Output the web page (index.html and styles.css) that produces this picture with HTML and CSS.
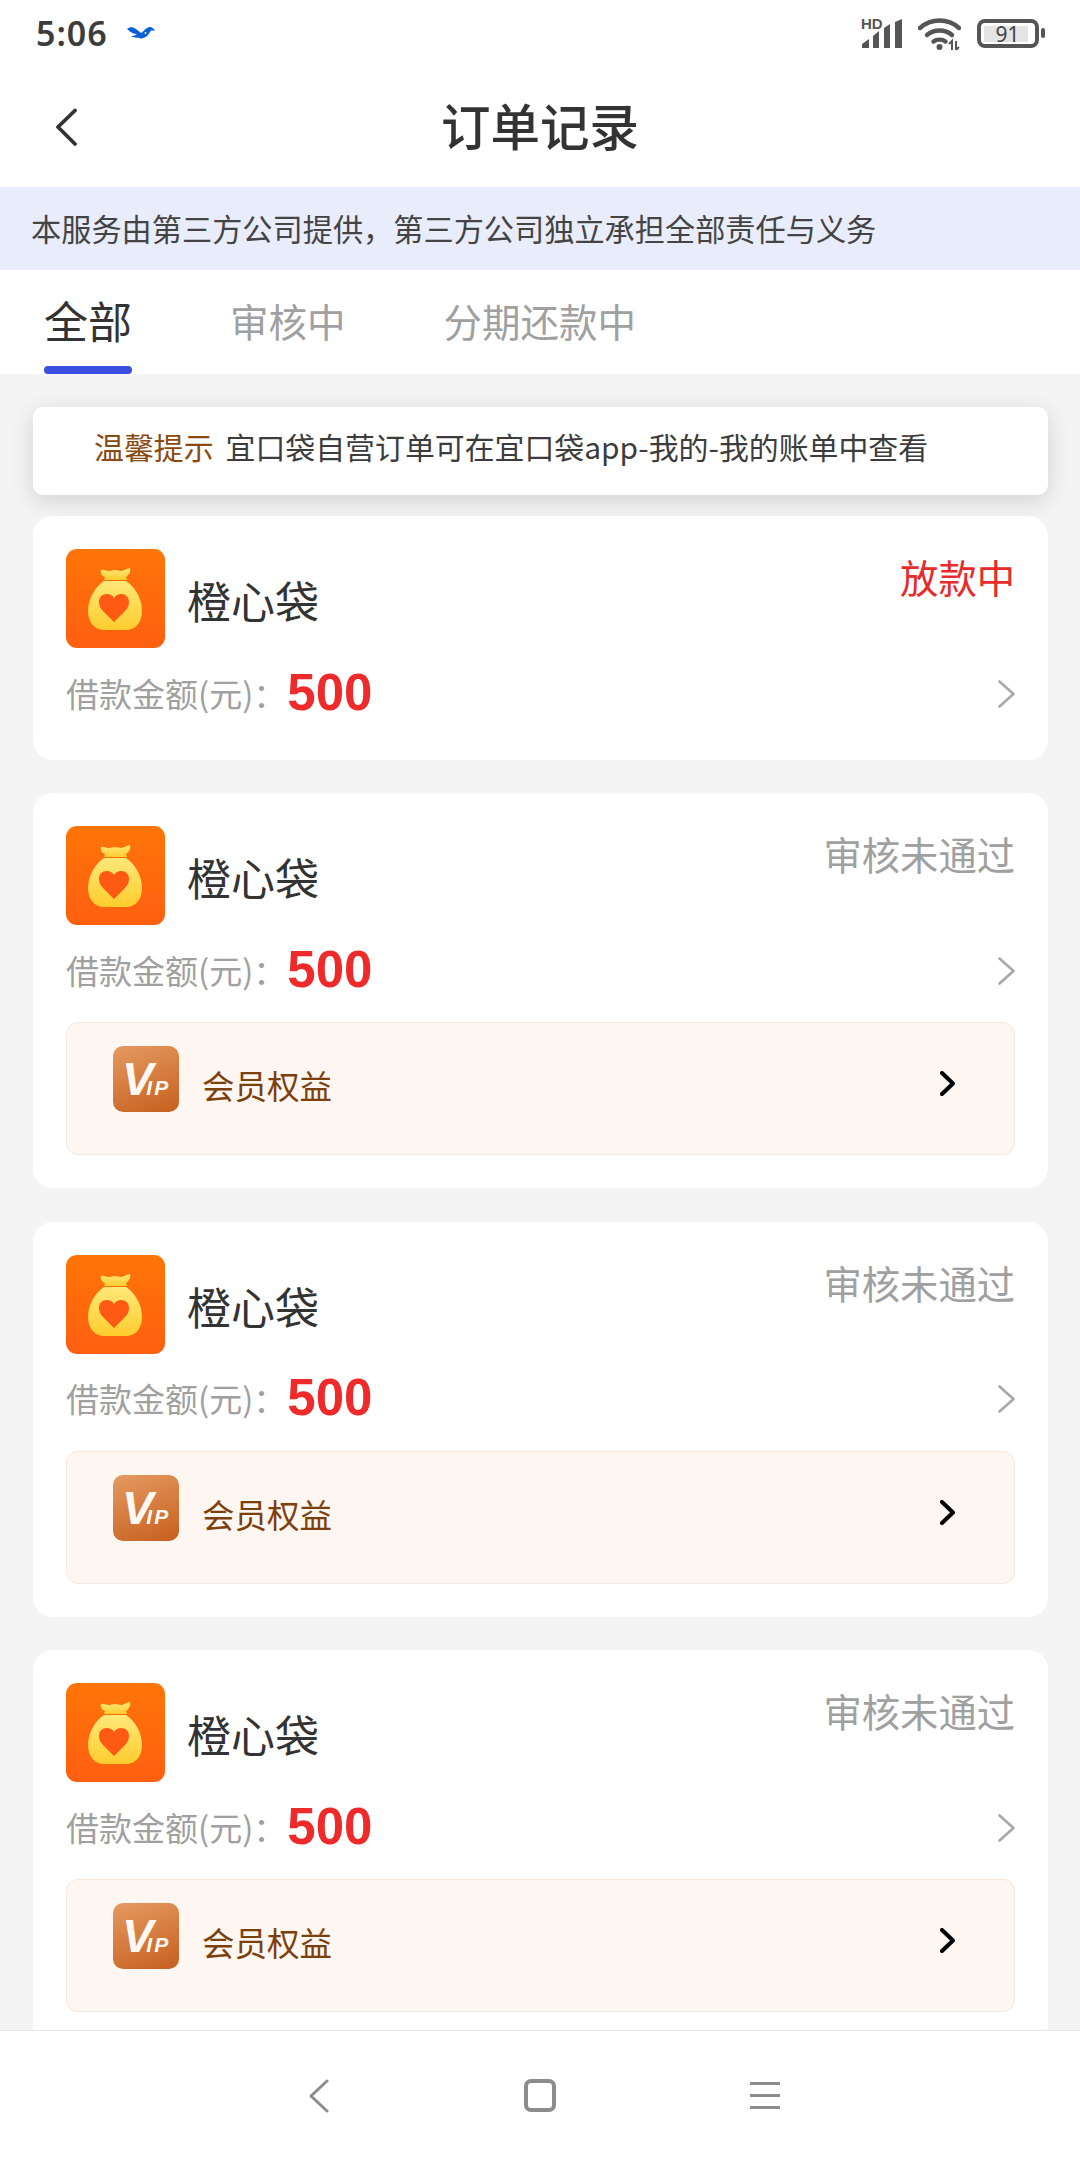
FILE: index.html
```html
<!DOCTYPE html>
<html>
<head>
  <title>订单记录</title>
  <link rel="stylesheet" href="styles.css">
</head>
<body>
  <svg class="sprites" width="0" height="0">
    <defs>
      <linearGradient id="tile" x1="0" y1="0" x2="0" y2="1">
        <stop offset="0" stop-color="#ff7508"/>
        <stop offset="1" stop-color="#ff5f10"/>
      </linearGradient>
      <linearGradient id="bag" x1="0" y1="0" x2="0" y2="1">
        <stop offset="0" stop-color="#ffe878"/>
        <stop offset="1" stop-color="#ffcc2e"/>
      </linearGradient>
      <symbol id="logo" viewBox="0 0 99 99">
        <rect width="99" height="99" rx="11" fill="url(#tile)"/>
        <path d="M35 21c3-1 5 1 8 1 2 0 4-1 6-1 2 0 4 1 6 1 3 0 6-3 9-3 1 4-1 7-4 9l1 3H38l1-3c-3-1-5-4-4-7z" fill="url(#bag)"/>
        <path d="M38 32h22c8 5 16 17 16 30 0 12-7 19-16 19H38c-9 0-16-7-16-19 0-13 8-25 16-30z" fill="url(#bag)"/>
        <path d="M48 73 L37 62c-3-3-4-6-4-9 0-5 3-8 8-8 3 0 5 1 7 4 2-3 4-4 7-4 5 0 8 3 8 8 0 3-1 6-4 9z" fill="#ff5a14"/>
      </symbol>
      <symbol id="chev" viewBox="0 0 17 28">
        <path d="M1.5 1.5 L15.5 14 L1.5 26.5" fill="none" stroke="currentColor" stroke-width="2.6" stroke-linecap="round" stroke-linejoin="round"/>
      </symbol>
      <symbol id="chev-bold" viewBox="0 0 15 25">
        <path d="M2 2 L13 12.5 L2 23" fill="none" stroke="currentColor" stroke-width="4" stroke-linecap="round" stroke-linejoin="round"/>
      </symbol>
    </defs>
  </svg>

  <div id="screen">
    <div class="status-bar">
      <div class="status-left">
        <span class="clock">5:06</span>
        <svg class="bird" width="28" height="12" viewBox="0 0 28 12">
          <path d="M0 2C2 .5 4 0 6 .5c3 1 5 3 8 5.500 1-.5 2-1.500 3-2.500 2-2 4-3.500 6-3.500 2 0 4 2 5 3.500l-4 0c-1 1.500-2 3.500-4 5.500-2 1.500-4 2.500-6 2.500-1 0-2-.5-3-1-2 .5-4 0-7-1 2-.5 4-1 6-2.500C7 7 4 6 0 2z" fill="#0a5fd6"/>
          <circle cx="18.500" cy="6" r="0.900" fill="#fff"/>
        </svg>
      </div>
      <div class="status-right">
        <div class="signal">
          <span class="hd">HD</span>
          <svg width="40" height="29" viewBox="0 0 40 29">
            <path d="M0 29v-4l7-5v9zM11 29V17l6-5v17zM22 29V9l6-4v24zM33 29V3l7-3v29z" fill="#555"/>
          </svg>
        </div>
        <svg class="wifi" width="43" height="32" viewBox="0 0 43 32">
          <g fill="none" stroke="#555" stroke-width="4.4" stroke-linecap="round">
            <path d="M2 10c11-10 28-10 39 0"/>
            <path d="M9 17c7-6 18-6 25 0"/>
            <path d="M15.500 23.500c3-2.500 9-2.500 12 0"/>
          </g>
          <circle cx="21.500" cy="29" r="3" fill="#555"/>
          <path d="M34 32v-9l-3 3M38 23v9l3-3" fill="none" stroke="#555" stroke-width="2"/>
        </svg>
        <div class="battery"><div class="battery-level">91</div></div>
        <div class="battery-cap"></div>
      </div>
    </div>

    <div class="nav-bar">
      <svg class="nav-back" width="24" height="40" viewBox="0 0 24 40">
        <path d="M22 3.500 L5 20 L22 37" fill="none" stroke="#333" stroke-width="3.800" stroke-linecap="round" stroke-linejoin="round"/>
      </svg>
      <h1 class="nav-title">订单记录</h1>
    </div>

    <div class="notice">本服务由第三方公司提供，第三方公司独立承担全部责任与义务</div>

    <div class="tabs">
      <div class="tab active">全部</div>
      <div class="tab">审核中</div>
      <div class="tab">分期还款中</div>
    </div>

    <div class="content">
      <div class="tip"><span class="tip-label">温馨提示</span>宜口袋自营订单可在宜口袋app-我的-我的账单中查看</div>

      <div class="card">
        <div class="card-head">
          <svg class="logo"><use href="#logo"/></svg>
          <span class="name">橙心袋</span>
          <span class="state lending">放款中</span>
        </div>
        <div class="amount-row">
          <span class="amount-label">借款金额(元)：</span>
          <span class="amount">500</span>
          <svg class="row-arrow"><use href="#chev"/></svg>
        </div>
      </div>

      <div class="card">
        <div class="card-head">
          <svg class="logo"><use href="#logo"/></svg>
          <span class="name">橙心袋</span>
          <span class="state">审核未通过</span>
        </div>
        <div class="amount-row">
          <span class="amount-label">借款金额(元)：</span>
          <span class="amount">500</span>
          <svg class="row-arrow"><use href="#chev"/></svg>
        </div>
        <div class="member">
          <div class="vip"><span class="vip-v">V</span><span class="vip-ip">IP</span></div>
          <span class="member-text">会员权益</span>
          <svg class="member-arrow"><use href="#chev-bold"/></svg>
        </div>
      </div>

      <div class="card">
        <div class="card-head">
          <svg class="logo"><use href="#logo"/></svg>
          <span class="name">橙心袋</span>
          <span class="state">审核未通过</span>
        </div>
        <div class="amount-row">
          <span class="amount-label">借款金额(元)：</span>
          <span class="amount">500</span>
          <svg class="row-arrow"><use href="#chev"/></svg>
        </div>
        <div class="member">
          <div class="vip"><span class="vip-v">V</span><span class="vip-ip">IP</span></div>
          <span class="member-text">会员权益</span>
          <svg class="member-arrow"><use href="#chev-bold"/></svg>
        </div>
      </div>

      <div class="card">
        <div class="card-head">
          <svg class="logo"><use href="#logo"/></svg>
          <span class="name">橙心袋</span>
          <span class="state">审核未通过</span>
        </div>
        <div class="amount-row">
          <span class="amount-label">借款金额(元)：</span>
          <span class="amount">500</span>
          <svg class="row-arrow"><use href="#chev"/></svg>
        </div>
        <div class="member">
          <div class="vip"><span class="vip-v">V</span><span class="vip-ip">IP</span></div>
          <span class="member-text">会员权益</span>
          <svg class="member-arrow"><use href="#chev-bold"/></svg>
        </div>
      </div>
    </div>

    <div class="system-nav">
      <svg width="20" height="34" viewBox="0 0 20 34">
        <path d="M18 2 L2 17 L18 32" fill="none" stroke="#8c8c8c" stroke-width="3" stroke-linecap="round" stroke-linejoin="round"/>
      </svg>
      <div class="home-key"></div>
      <div class="menu-key"><span></span><span></span><span></span></div>
    </div>
  </div>
</body>
</html>
```

FILE: styles.css
```css
* { box-sizing: border-box; }

body {
  margin: 0;
  background-color: #fff;
  font-family: "Noto Sans CJK SC", "Noto Sans", sans-serif;
}

.sprites { position: absolute; }

#screen {
  width: 1080px;
  height: 2160px;
  display: flex;
  flex-direction: column;
  overflow: hidden;
}

.status-bar {
  height: 70px;
  flex: none;
  display: flex;
  justify-content: space-between;
  align-items: center;
  padding: 0 35px 4px 36px;
  background-color: #fff;
}

.status-left, .status-right { display: flex; align-items: center; }

.clock {
  font-family: "Noto Sans", sans-serif;
  font-size: 34px;
  font-weight: 600;
  letter-spacing: 1px;
  color: #3c3c3c;
  line-height: 40px;
}

.bird { margin-left: 19px; margin-top: -1px; }

.status-right { gap: 16px; }

.signal { position: relative; width: 40px; height: 29px; }
.signal svg { display: block; }
.hd {
  position: absolute;
  left: -1px;
  top: -3px;
  font-family: "Liberation Sans", sans-serif;
  font-size: 15px;
  font-weight: 700;
  line-height: 15px;
  color: #555;
}

.wifi { margin-top: 2px; }

.battery {
  width: 62px;
  height: 29px;
  border: 4px solid #555;
  border-radius: 8px;
  padding: 3px;
  margin-right: -14px;
}
.battery-level {
  width: 44px;
  height: 16px;
  padding-left: 3px;
  background-color: #e4e4e4;
  font-family: "Noto Sans", sans-serif;
  font-size: 21px;
  line-height: 16px;
  text-align: center;
  color: #444;
}
.battery-cap {
  width: 4px;
  height: 10px;
  background-color: #555;
  border-radius: 2px;
}

.nav-bar {
  height: 117px;
  flex: none;
  position: relative;
  display: flex;
  align-items: center;
  justify-content: center;
  padding-bottom: 8px;
  background-color: #fff;
}
.nav-back { position: absolute; left: 53px; top: 37px; }
.nav-title {
  margin: 0;
  font-size: 49.5px;
  font-weight: 500;
  line-height: 60px;
  color: #333;
}

.notice {
  height: 83px;
  flex: none;
  padding-left: 31px;
  font-size: 30.2px;
  line-height: 83px;
  color: #444;
  background-color: #e9ecfb;
  white-space: nowrap;
}

.tabs {
  height: 104px;
  flex: none;
  display: flex;
  padding-left: 44px;
  background-color: #fff;
}
.tab {
  margin-right: 98px;
  font-size: 38.5px;
  line-height: 100px;
  color: #a0a0a0;
}
.tab.active {
  position: relative;
  font-size: 44px;
  color: #333;
  margin-right: 98px;
}
.tab.active::after {
  content: "";
  position: absolute;
  left: 0;
  right: 0;
  bottom: 0;
  height: 8px;
  border-radius: 4px;
  background-color: #3a4fe0;
}

.content {
  flex: 1;
  min-height: 0;
  overflow: hidden;
  padding: 33px 32px 0 33px;
  background-color: #f4f4f4;
}

.tip {
  height: 88px;
  margin-bottom: 21px;
  padding-left: 61px;
  border-radius: 10px;
  background-color: #fff;
  box-shadow: 0 6px 24px rgba(0, 0, 0, 0.14);
  font-size: 29.9px;
  line-height: 79px;
  color: #3c3c3c;
  white-space: nowrap;
}
.tip-label { color: #8a4a12; margin-right: 12px; }

.card {
  margin-bottom: 33.4px;
  padding: 33px;
  border-radius: 20px;
  background-color: #fff;
}

.card-head {
  height: 99px;
  display: flex;
  position: relative;
}
.logo { width: 99px; height: 99px; flex: none; }
.name {
  margin-left: 22px;
  padding-top: 2px;
  font-size: 44px;
  line-height: 99px;
  color: #333;
}
.state {
  margin-left: auto;
  font-size: 38.3px;
  line-height: 55px;
  color: #a0a0a0;
}
.state.lending { color: #e92a2a; }

.amount-row {
  height: 79px;
  padding-top: 12px;
  display: flex;
  align-items: center;
}
.amount-label {
  font-size: 33px;
  line-height: 70px;
  color: #a0a0a0;
  margin-bottom: 2px;
}
.amount {
  margin-left: 1px;
  margin-bottom: 2px;
  font-family: "Liberation Sans", sans-serif;
  font-size: 51px;
  font-weight: 700;
  line-height: 60px;
  color: #ee2a2a;
}
.row-arrow {
  width: 17px;
  height: 28px;
  margin-left: auto;
  color: #a8a8a8;
}

.member {
  height: 133px;
  margin-top: 18px;
  padding: 23px 59px 0 46px;
  display: flex;
  border: 1.5px solid #f8e8dc;
  border-radius: 12px;
  background-color: #fdf6f1;
}
.vip {
  width: 66px;
  height: 66px;
  flex: none;
  display: flex;
  align-items: baseline;
  padding: 9px 0 0 9px;
  overflow: hidden;
  border-radius: 10px;
  background-image: linear-gradient(160deg, #e59a62, #c65f1e);
  font-family: "Liberation Sans", sans-serif;
  font-style: italic;
  font-weight: 700;
  color: #fff8f2;
}
.vip-v {
  font-size: 47px;
  line-height: 48px;
  letter-spacing: -7px;
}
.vip-ip {
  font-size: 21px;
  line-height: 22px;
  letter-spacing: 2px;
}
.member-text {
  margin-left: 23px;
  font-size: 32.5px;
  line-height: 78px;
  color: #7d3f0c;
}
.member-arrow {
  width: 15px;
  height: 25px;
  margin-left: auto;
  margin-top: 25px;
  color: #000;
}

.system-nav {
  height: 130px;
  flex: none;
  display: flex;
  align-items: center;
  padding: 0 300px 0 309px;
  justify-content: space-between;
  background-color: #fff;
  border-top: 1px solid #e8e8e8;
}
.home-key {
  width: 32px;
  height: 33px;
  border: 4px solid #8c8c8c;
  border-radius: 7px;
}
.menu-key {
  width: 30px;
  display: flex;
  flex-direction: column;
  gap: 9px;
}
.menu-key span {
  height: 3px;
  background-color: #8c8c8c;
}
```
